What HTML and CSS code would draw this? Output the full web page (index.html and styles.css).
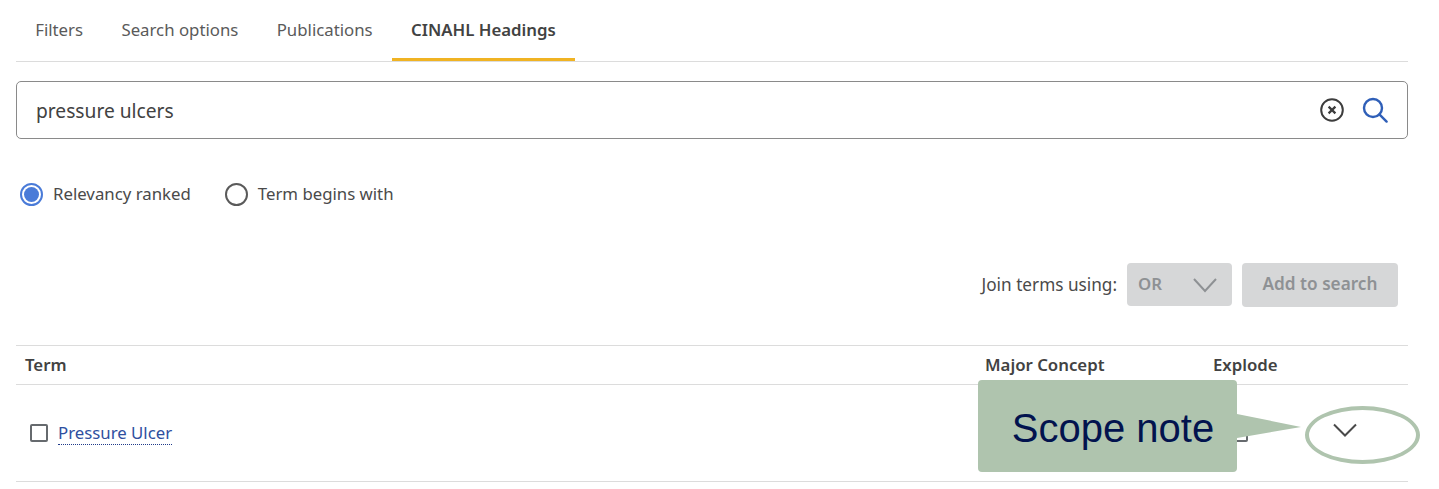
FILE: index.html
```html
<!DOCTYPE html>
<html lang="en">
<head>
<meta charset="UTF-8">
<title>CINAHL Headings</title>
<link rel="stylesheet" href="styles.css">
</head>
<body>
<div class="panel">

  <!-- tabs -->
  <div class="tabs">
    <a class="tab">Filters</a>
    <a class="tab">Search options</a>
    <a class="tab">Publications</a>
    <a class="tab active">CINAHL Headings</a>
  </div>

  <!-- search box -->
  <div class="search-box">
    <span class="search-text">pressure ulcers</span>
    <svg class="clear-icon" width="24" height="24" viewBox="0 0 24 24" fill="none" stroke="#3d3d3d">
      <circle cx="12" cy="12" r="10.8" stroke-width="2"/>
      <path d="M8.600 8.600l6.800 6.800M15.400 8.600l-6.800 6.800" stroke-width="2.200"/>
    </svg>
    <svg class="search-icon" width="26" height="26" viewBox="0 0 26 26" fill="none" stroke="#2f5fb8" stroke-width="2.400">
      <circle cx="11" cy="11" r="9"/>
      <path d="M17.400 17.400l7.200 7.200" stroke-linecap="round"/>
    </svg>
  </div>

  <div class="radios">
    <label class="radio-item"><span class="radio checked"></span>Relevancy ranked</label>
    <label class="radio-item"><span class="radio"></span>Term begins with</label>
  </div>

  <div class="toolbar">
    <span class="join-label">Join terms using:</span>
    <div class="select-btn">
      <span>OR</span>
      <svg width="26" height="16" viewBox="0 0 26 16" fill="none" stroke="#8e9194" stroke-width="2"><path d="M2 2l11 12L24 2"/></svg>
    </div>
    <button class="add-btn">Add to search</button>
  </div>

  <!-- term table -->
  <div class="table">
    <div class="table-row head">
      <div class="col-term">Term</div>
      <div class="col-major">Major Concept</div>
      <div class="col-explode">Explode</div>
      <div class="col-more"></div>
    </div>
    <div class="table-row body">
      <div class="col-term">
        <span class="checkbox"></span>
        <a class="term-link">Pressure Ulcer</a>
      </div>
      <div class="col-major"><span class="checkbox"></span></div>
      <div class="col-explode"><span class="checkbox"></span></div>
      <div class="col-more">
        <svg width="24" height="14" viewBox="0 0 24 14" fill="none" stroke="#4a4a4a" stroke-width="2"><path d="M1 1.500l11 11 11-11"/></svg>
      </div>
    </div>
  </div>

  <!-- annotation over the table -->
  <div class="callout">Scope note</div>
  <svg class="callout-arrow" width="66" height="24" viewBox="0 0 66 24"><path d="M0 0L64 13 0 24z" fill="#afc4ae"/></svg>
  <div class="callout-ring"></div>
</div>
</body>
</html>
```

FILE: styles.css
```css
html, body {
  margin: 0;
  height: 100%;
  overflow: hidden;
  background: #fff;
}
body {
  font-family: "Noto Sans", sans-serif;
  font-size: 16.8px;
  color: #424242;
}
.panel {
  position: relative;
  width: 1392px;
  margin-left: 16px;
}

.tabs {
  display: flex;
  height: 61px;
  border-bottom: 1px solid #dcdcdc;
}
.tab {
  height: 61px;
  padding: 0 19.200px;
  line-height: 60px;
  color: #5a5a5a;
  box-sizing: border-box;
}
.tab.active {
  font-weight: 600;
  color: #424242;
  border-bottom: 3px solid #f0b323;
}

.search-box {
  display: flex;
  align-items: center;
  height: 58px;
  margin-top: 19px;
  padding: 0 19px;
  border: 1px solid #8a8a8a;
  border-radius: 5px;
  box-sizing: border-box;
}
.search-text {
  flex: 1;
  padding-top: 1px;
  font-size: 19.200px;
  color: #424242;
}
.clear-icon {
  margin-right: 18px;
}

.radios {
  display: flex;
  align-items: center;
  gap: 34px;
  margin-top: 40px;
  padding-left: 4px;
  height: 28px;
}
.radio-item {
  display: flex;
  align-items: center;
  gap: 10px;
  color: #4a4a4a;
}
.radio {
  width: 23px;
  height: 23px;
  margin-top: 2px;
  border: 2px solid #5a5a5a;
  border-radius: 50%;
  box-sizing: border-box;
  background: #fff;
}
.radio.checked {
  border-color: #4a7bd8;
  padding: 2px;
  background: #4a7bd8 content-box;
}

.toolbar {
  display: flex;
  align-items: center;
  justify-content: flex-end;
  height: 44px;
  margin-top: 56px;
  padding-right: 10px;
}
.join-label {
  margin-right: 10px;
  padding-bottom: 2px;
  font-size: 17.200px;
  color: #4a4a4a;
}
.select-btn {
  display: flex;
  align-items: center;
  justify-content: space-between;
  width: 105px;
  height: 43px;
  margin-right: 10px;
  margin-bottom: 1px;
  padding: 0 14px 0 11px;
  background: #d6d7d8;
  border-radius: 4px;
  box-sizing: border-box;
  font-weight: 600;
  color: #8e9194;
}
.select-btn span {
  line-height: 1;
}
.add-btn {
  width: 156px;
  height: 44px;
  padding: 0 0 3px;
  border: none;
  border-radius: 4px;
  background: #d6d7d8;
  font-family: inherit;
  font-size: 17.200px;
  font-weight: 600;
  color: #8e9194;
}

.table {
  margin-top: 38px;
  border-top: 1px solid #dcdcdc;
}
.table-row {
  display: flex;
  align-items: center;
  border-bottom: 1px solid #dcdcdc;
}
.table-row.head {
  height: 36px;
  padding-bottom: 2px;
  font-weight: 600;
}
.table-row.body {
  height: 96px;
}
.col-term {
  display: flex;
  align-items: center;
  width: 969px;
  padding-left: 9px;
  box-sizing: border-box;
}
.col-major {
  width: 228px;
}
.col-explode {
  width: 95px;
  box-sizing: border-box;
}
.col-more {
  padding-left: 25px;
  margin-top: -6px;
}
.body .col-term {
  padding-left: 14px;
}
.body .col-explode {
  padding-left: 17px;
}
.checkbox {
  display: block;
  width: 18px;
  height: 18px;
  border: 2px solid #666a6e;
  border-radius: 2px;
  box-sizing: border-box;
}
.term-link {
  margin-left: 10px;
  padding: 1px 0;
  color: #2f4f9f;
  border-bottom: 1px dotted #1f3a8a;
  line-height: 21px;
}

.callout {
  position: absolute;
  left: 962px;
  top: 380px;
  width: 259px;
  height: 92px;
  padding-left: 11px;
  border-radius: 4px;
  background: #afc4ae;
  box-sizing: border-box;
  font-family: "Liberation Sans", sans-serif;
  font-size: 40px;
  line-height: 96px;
  text-align: center;
  color: #02134e;
}
.callout-arrow {
  position: absolute;
  left: 1221px;
  top: 414px;
}
.callout-ring {
  position: absolute;
  left: 1289px;
  top: 406px;
  width: 115px;
  height: 58px;
  border: 4px solid #afc4ae;
  border-radius: 50%;
  box-sizing: border-box;
}
```
